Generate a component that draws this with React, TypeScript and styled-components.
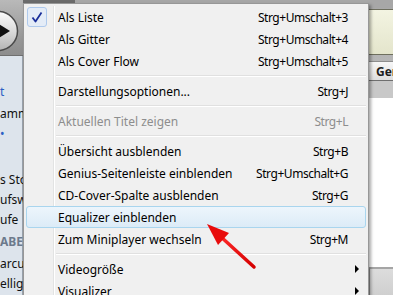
import React from "react";
import styled, { createGlobalStyle } from "styled-components";

const GlobalStyle = createGlobalStyle`
  html, body {
    margin: 0;
    padding: 0;
    background: #fff;
  }
  body {
    font-family: "Noto Sans", "DejaVu Sans", sans-serif;
    font-size: 12px;
  }
`;

const Window = styled.div`
  position: relative;
  width: 393px;
  height: 295px;
  overflow: hidden;
  display: grid;
  grid-template-columns: 23px 1fr;
  background: #fff;
`;

const LeftColumn = styled.div`
  display: flex;
  flex-direction: column;
  overflow: hidden;
`;

const Toolbar = styled.div`
  height: 55px;
  flex-shrink: 0;
  background: linear-gradient(#b9b9b9, #979797 70%, #8d8d8d);
  border-bottom: 1px solid #6f6f6f;
  overflow: hidden;
`;

const Sidebar = styled.div`
  flex: 1;
  background: #dde4ec;
  padding-top: 26px;
  display: flex;
  flex-direction: column;
  border-right: 1px solid #9aa3ad;
`;

const SideRow = styled.div<{ $mt?: number; $tone?: "link" | "head" }>`
  height: 20px;
  line-height: 20px;
  margin-top: ${(p) => p.$mt ?? 0}px;
  white-space: nowrap;
  color: ${(p) =>
    p.$tone === "link" ? "#2b5fc4" : p.$tone === "head" ? "#6c7a8c" : "#111"};
  font-weight: ${(p) => (p.$tone === "head" ? 700 : 400)};
`;

const RightColumn = styled.div`
  display: flex;
  flex-direction: column;
`;

const TopBar = styled.div`
  height: 8px;
  flex-shrink: 0;
  background: #a7a7a7;
  display: flex;
`;

const PressedItem = styled.div`
  width: 52px;
  background: #6b6b6b;
`;

const LcdRow = styled.div`
  height: 53px;
  flex-shrink: 0;
  background: linear-gradient(#a9a9a9, #b6b6b6);
  padding: 1px 0 6px 6px;
  box-sizing: border-box;
  display: flex;
`;

const Lcd = styled.div`
  flex: 1;
  border: 1px solid #6e6f5e;
  border-right: none;
  border-radius: 4px 0 0 4px;
  background: linear-gradient(#f3f4e2, #e4e5cc);
`;

const ColumnHeader = styled.div`
  height: 18px;
  flex-shrink: 0;
  background: linear-gradient(#f7f7f7, #dedede);
  border-top: 1px solid #8e8e8e;
  border-bottom: 1px solid #6f6f6f;
  display: flex;
  align-items: center;
  padding-left: 353px;
  font-weight: 700;
  color: #1c1c1c;
  white-space: nowrap;
`;

const GrayBand = styled.div`
  height: 17px;
  flex-shrink: 0;
  background: #c8c8c8;
`;

const ListArea = styled.div`
  flex: 1;
  background: #fff;
`;

const BottomBar = styled.div`
  height: 26px;
  flex-shrink: 0;
  background: linear-gradient(#dcdcdc, #cfcfcf);
  border-top: 2px solid #a5a5a5;
  border-left: 1px solid #8c8c8c;
  margin-left: 346px;
`;

const Menu = styled.div`
  position: absolute;
  left: 23px;
  top: 3px;
  width: 346px;
  box-sizing: border-box;
  background: #f0f0f0;
  border: 1px solid #979797;
  padding: 2px;
  box-shadow: 2px 2px 3px rgba(0, 0, 0, 0.35);

  &::before {
    content: "";
    position: absolute;
    top: 2px;
    bottom: 2px;
    left: 29px;
    width: 1px;
    background: #e2e3e3;
    border-right: 1px solid #ffffff;
  }
`;

const Item = styled.div<{ $active?: boolean; $disabled?: boolean }>`
  position: relative;
  height: 22px;
  box-sizing: border-box;
  display: grid;
  grid-template-columns: 31px minmax(0, 1fr) auto 17px;
  align-items: center;
  color: ${(p) => (p.$disabled ? "#8d8d8d" : "#000")};
  border: 1px solid ${(p) => (p.$active ? "#a9d5ee" : "transparent")};
  border-radius: 3px;
  background: ${(p) =>
    p.$active ? "linear-gradient(#edf5fc, #dcebf7)" : "transparent"};
  white-space: nowrap;
`;

const Gutter = styled.div`
  height: 100%;
  display: flex;
  align-items: center;
`;

const CheckBox = styled.div`
  width: 20px;
  height: 20px;
  box-sizing: border-box;
  border: 1px solid #aec9ec;
  border-radius: 3px;
  background: #e4ecf7;
  display: flex;
  align-items: center;
  justify-content: center;
`;

const Label = styled.span``;

const Shortcut = styled.span`
  text-align: right;
  padding-left: 12px;
  letter-spacing: -0.45px;
`;

const SubArrow = styled.span`
  margin-left: 7px;
  width: 0;
  height: 0;
  border-top: 4px solid transparent;
  border-bottom: 4px solid transparent;
  border-left: 4px solid #000;
`;

const Separator = styled.div`
  height: 8px;
  display: flex;
  align-items: center;
  padding-left: 30px;

  &::after {
    content: "";
    flex: 1;
    height: 0;
    border-top: 1px solid #e0e0e0;
    border-bottom: 1px solid #ffffff;
  }
`;

const Overlay = styled.svg`
  position: absolute;
  left: 0;
  top: 0;
  pointer-events: none;
`;

type Entry =
  | { sep: true }
  | {
      sep?: false;
      label: string;
      shortcut?: string;
      checked?: boolean;
      active?: boolean;
      disabled?: boolean;
      sub?: boolean;
    };

const ENTRIES: Entry[] = [
  { label: "Als Liste", shortcut: "Strg+Umschalt+3", checked: true },
  { label: "Als Gitter", shortcut: "Strg+Umschalt+4" },
  { label: "Als Cover Flow", shortcut: "Strg+Umschalt+5" },
  { sep: true },
  { label: "Darstellungsoptionen...", shortcut: "Strg+J" },
  { sep: true },
  { label: "Aktuellen Titel zeigen", shortcut: "Strg+L", disabled: true },
  { sep: true },
  { label: "Übersicht ausblenden", shortcut: "Strg+B" },
  { label: "Genius-Seitenleiste einblenden", shortcut: "Strg+Umschalt+G" },
  { label: "CD-Cover-Spalte ausblenden", shortcut: "Strg+G" },
  { label: "Equalizer einblenden", active: true },
  { label: "Zum Miniplayer wechseln", shortcut: "Strg+M" },
  { sep: true },
  { label: "Videogröße", sub: true },
  { label: "Visualizer", sub: true },
];

const PlayButton = () => (
  <svg width="23" height="55" viewBox="0 0 23 55">
    <defs>
      <linearGradient id="pb" x1="0" y1="0" x2="0" y2="1">
        <stop offset="0" stopColor="#fbfbfb" />
        <stop offset="0.5" stopColor="#dcdcdc" />
        <stop offset="1" stopColor="#b4b4b4" />
      </linearGradient>
    </defs>
    <circle cx="-2" cy="31" r="19.5" fill="url(#pb)" stroke="#4a4a4a" strokeWidth="1.5" />
    <path d="M-1 24 L10 31 L-1 38 Z" fill="#111" />
  </svg>
);

const Check = () => (
  <svg width="12" height="12" viewBox="0 0 12 12">
    <path
      d="M1.5 6.5 L4.5 10.5 L10.5 1.5"
      fill="none"
      stroke="#1b2f9a"
      strokeWidth="1.8"
      strokeLinejoin="round"
    />
  </svg>
);

export default function App() {
  return (
    <>
      <GlobalStyle />
      <Window>
        <LeftColumn>
          <Toolbar>
            <PlayButton />
          </Toolbar>
          <Sidebar>
            <SideRow $tone="link">t</SideRow>
            <SideRow $mt={2}>amm</SideRow>
            <SideRow $tone="link">•</SideRow>
            <SideRow $mt={26}>s Sto</SideRow>
            <SideRow>ufsw</SideRow>
            <SideRow>ufe</SideRow>
            <SideRow $mt={2} $tone="head">ABELI</SideRow>
            <SideRow $mt={2}>arcus</SideRow>
            <SideRow>ellige</SideRow>
          </Sidebar>
        </LeftColumn>
        <RightColumn>
          <TopBar>
            <PressedItem />
          </TopBar>
          <LcdRow>
            <Lcd />
          </LcdRow>
          <ColumnHeader>Genre</ColumnHeader>
          <GrayBand />
          <ListArea />
          <BottomBar />
        </RightColumn>

        <Menu>
          {ENTRIES.map((e, i) =>
            e.sep ? (
              <Separator key={i} />
            ) : (
              <Item key={i} $active={e.active} $disabled={e.disabled}>
                <Gutter>
                  {e.checked && (
                    <CheckBox>
                      <Check />
                    </CheckBox>
                  )}
                </Gutter>
                <Label>{e.label}</Label>
                <Shortcut>{e.shortcut ?? ""}</Shortcut>
                {e.sub ? <SubArrow /> : <span />}
              </Item>
            )
          )}
        </Menu>

        <Overlay width="393" height="295" viewBox="0 0 393 295">
          <defs>
            <linearGradient id="ra" x1="0" y1="0" x2="1" y2="1">
              <stop offset="0" stopColor="#ff2a2a" />
              <stop offset="1" stopColor="#d40000" />
            </linearGradient>
          </defs>
          <line
            x1="254"
            y1="267"
            x2="220"
            y2="236"
            stroke="url(#ra)"
            strokeWidth="3.5"
            strokeLinecap="round"
          />
          <path d="M207 224 L229 233 L218 245 Z" fill="#e80c0c" />
        </Overlay>
      </Window>
    </>
  );
}
